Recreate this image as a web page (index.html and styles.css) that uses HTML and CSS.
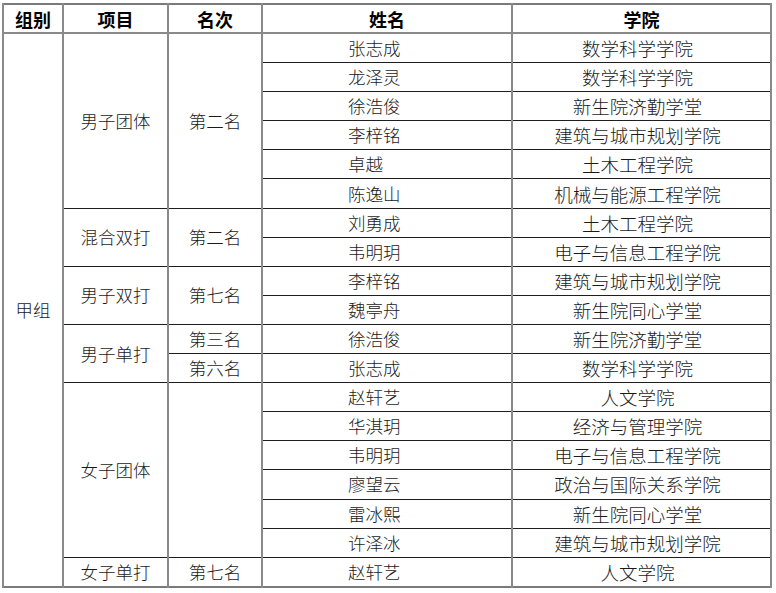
FILE: index.html
```html
<!DOCTYPE html>
<html lang="zh">
<head>
<meta charset="utf-8">
<link rel="stylesheet" href="styles.css">
</head>
<body>
<table class="results">
  <colgroup>
    <col class="c-group"><col class="c-event"><col class="c-rank"><col class="c-name"><col class="c-college">
  </colgroup>
  <thead>
    <tr><th>组别</th><th>项目</th><th>名次</th><th>姓名</th><th>学院</th></tr>
  </thead>
  <tbody>
    <tr><td rowspan="19" class="center">甲组</td><td rowspan="6" class="center">男子团体</td><td rowspan="6" class="center">第二名</td><td class="name">张志成</td><td class="college">数学科学学院</td></tr>
    <tr><td class="name">龙泽灵</td><td class="college">数学科学学院</td></tr>
    <tr><td class="name">徐浩俊</td><td class="college">新生院济勤学堂</td></tr>
    <tr><td class="name">李梓铭</td><td class="college">建筑与城市规划学院</td></tr>
    <tr><td class="name">卓越</td><td class="college">土木工程学院</td></tr>
    <tr><td class="name">陈逸山</td><td class="college">机械与能源工程学院</td></tr>
    <tr><td rowspan="2" class="center">混合双打</td><td rowspan="2" class="center">第二名</td><td class="name">刘勇成</td><td class="college">土木工程学院</td></tr>
    <tr><td class="name">韦明玥</td><td class="college">电子与信息工程学院</td></tr>
    <tr><td rowspan="2" class="center">男子双打</td><td rowspan="2" class="center">第七名</td><td class="name">李梓铭</td><td class="college">建筑与城市规划学院</td></tr>
    <tr><td class="name">魏亭舟</td><td class="college">新生院同心学堂</td></tr>
    <tr><td rowspan="2" class="center">男子单打</td><td class="center">第三名</td><td class="name">徐浩俊</td><td class="college">新生院济勤学堂</td></tr>
    <tr><td class="center">第六名</td><td class="name">张志成</td><td class="college">数学科学学院</td></tr>
    <tr><td rowspan="6" class="center">女子团体</td><td rowspan="6" class="center"></td><td class="name">赵轩艺</td><td class="college">人文学院</td></tr>
    <tr><td class="name">华淇玥</td><td class="college">经济与管理学院</td></tr>
    <tr><td class="name">韦明玥</td><td class="college">电子与信息工程学院</td></tr>
    <tr><td class="name">廖望云</td><td class="college">政治与国际关系学院</td></tr>
    <tr><td class="name">雷冰熙</td><td class="college">新生院同心学堂</td></tr>
    <tr><td class="name">许泽冰</td><td class="college">建筑与城市规划学院</td></tr>
    <tr><td class="center">女子单打</td><td class="center">第七名</td><td class="name">赵轩艺</td><td class="college">人文学院</td></tr>
  </tbody>
</table>
</body>
</html>
```

FILE: styles.css
```css
html, body {
  margin: 0;
  padding: 0;
  background: #ffffff;
}

body {
  padding: 3px 0 0 2px;
}

.results {
  border-collapse: collapse;
  table-layout: fixed;
  width: 768px;
  border: 2px solid #7a7a7a;
  font-family: "Noto Sans CJK SC", "Noto Sans CJK JP", sans-serif;
  color: #1a1a1a;
}

.c-group { width: 60px; }
.c-event { width: 105px; }
.c-rank { width: 94px; }
.c-name { width: 250px; }
.c-college { width: 259px; }

.results th {
  height: 27px;
  padding: 0;
  font-size: 18px;
  font-weight: 700;
  line-height: 20px;
  color: #000;
  text-align: center;
  border-left: 2px solid #8a8a8a;
  border-right: 2px solid #8a8a8a;
  border-bottom: 2px solid #8a8a8a;
}

.results td {
  height: 28.1px;
  padding: 0;
  font-size: 17.5px;
  font-weight: 300;
  line-height: 20px;
  vertical-align: middle;
  border-top: 1px solid #1e1e1e;
  border-bottom: 1px solid #1e1e1e;
  border-left: 2px solid #8a8a8a;
  border-right: 2px solid #8a8a8a;
  white-space: nowrap;
  overflow: hidden;
}

.results td.center {
  text-align: center;
}

.results td.name {
  text-align: left;
  padding-left: 85px;
}

.results td.college {
  text-align: center;
  padding-right: 8px;
  font-size: 18.5px;
}
```
